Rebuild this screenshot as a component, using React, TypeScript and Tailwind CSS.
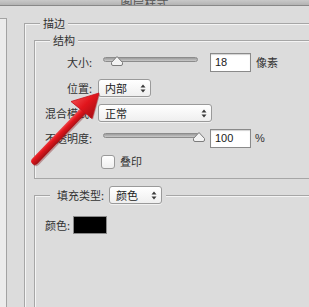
import type { ReactNode } from "react";

const LINE = "border-[#a6a6a6]";

function UpDown() {
  return (
    <svg width="6" height="9" viewBox="0 0 6 9" className="shrink-0">
      <path d="M3 0.5 L5.5 3.5 L0.5 3.5 Z" fill="#3a3a3a" />
      <path d="M3 8.5 L5.5 5.5 L0.5 5.5 Z" fill="#3a3a3a" />
    </svg>
  );
}

function Select({ value, width }: { value: string; width: string }) {
  return (
    <div
      className={`${width} flex h-[18px] shrink-0 items-center justify-between rounded-[3px] border border-[#9a9a9a] bg-linear-to-b from-white to-[#efefef] pl-[6px] pr-[4px] shadow-[0_1px_0_rgba(255,255,255,0.6)]`}
    >
      <span className="text-[11px] leading-none text-[#222]">{value}</span>
      <UpDown />
    </div>
  );
}

function Thumb({ left }: { left: string }) {
  return (
    <svg width="12" height="10" viewBox="0 0 12 10" className={`absolute top-[-2px] ${left}`}>
      <path
        d="M6 0.5 L11.5 6.5 L11.5 8 Q11.5 9.5 10 9.5 L2 9.5 Q0.5 9.5 0.5 8 L0.5 6.5 Z"
        fill="#f3f3f3"
        stroke="#7c7c7c"
      />
    </svg>
  );
}

function Slider({ width, thumb }: { width: string; thumb: string }) {
  return (
    <div className={`${width} h-[19px] shrink-0 self-start pt-[4px]`}>
      <div className="relative h-[5px] rounded-full border border-[#8c8c8c] bg-linear-to-b from-[#9c9c9c] to-[#c9c9c9]">
        <Thumb left={thumb} />
      </div>
    </div>
  );
}

function NumberBox({ value }: { value: string }) {
  return (
    <div className="flex h-[19px] w-[41px] shrink-0 items-center border border-[#8a8a8a] bg-white pl-[4px] font-['Liberation_Sans',sans-serif] text-[11px] text-[#1a1a1a] shadow-[inset_0_1px_1px_rgba(0,0,0,0.18)]">
      {value}
    </div>
  );
}

function Label({ children }: { children: ReactNode }) {
  return <div className="w-[57px] shrink-0 text-right text-[11px] leading-none text-[#333]">{children}</div>;
}

function Group({
  title,
  bodyClass,
  children,
}: {
  title: string;
  bodyClass: string;
  children: ReactNode;
}) {
  return (
    <div className="flex flex-col">
      <div className="flex h-[14px] items-center">
        <div className={`h-[7px] w-[16px] self-end border-l border-t ${LINE} shadow-[inset_1px_1px_0_#f4f4f4]`} />
        <span className="px-[3px] text-[11px] leading-none text-[#333]">{title}</span>
        <div className={`h-[7px] flex-1 self-end border-t ${LINE} shadow-[inset_0_1px_0_#f4f4f4]`} />
      </div>
      <div className={`border-l ${LINE} shadow-[inset_1px_0_0_#f4f4f4] ${bodyClass}`}>{children}</div>
    </div>
  );
}

function RedArrow() {
  return (
    <svg width="309" height="307" viewBox="0 0 309 307" className="pointer-events-none absolute left-0 top-0">
      <defs>
        <linearGradient id="shaft" gradientUnits="userSpaceOnUse" x1="57" y1="131" x2="63" y2="137">
          <stop offset="0" stopColor="#f25a5c" />
          <stop offset="0.45" stopColor="#e3161d" />
          <stop offset="1" stopColor="#a90f14" />
        </linearGradient>
        <linearGradient id="head" gradientUnits="userSpaceOnUse" x1="74" y1="98" x2="92" y2="116">
          <stop offset="0" stopColor="#f0484b" />
          <stop offset="0.5" stopColor="#e1151c" />
          <stop offset="1" stopColor="#ae1016" />
        </linearGradient>
      </defs>
      <line x1="35" y1="161" x2="84" y2="110" stroke="#7a0a0d" strokeOpacity="0.35" strokeWidth="8" strokeLinecap="round" transform="translate(1 1)" />
      <path d="M99 93 L71 101.5 L92 118.5 Z" fill="#7a0a0d" fillOpacity="0.35" transform="translate(1 1)" />
      <line x1="35" y1="161" x2="84" y2="110" stroke="url(#shaft)" strokeWidth="7.5" strokeLinecap="round" />
      <path d="M99 93 L71 101.5 L92 118.5 Z" fill="url(#head)" stroke="#c5121a" strokeWidth="0.8" strokeLinejoin="round" />
    </svg>
  );
}

export default function App() {
  return (
    <div className="relative h-[307px] w-[309px] overflow-hidden bg-[#dcdcdc] font-['Noto_Sans_CJK_SC','Noto_Sans',sans-serif]">
      <div className="flex h-[6px] items-end justify-center overflow-hidden border-b border-[#888] bg-linear-to-b from-[#c9c9c9] to-[#b3b3b3]">
        <span className="mb-[-5px] ml-[-20px] text-[12px] leading-[12px] text-[#555]">图层样式</span>
      </div>
      <div className="flex">
        <div className="mt-[12px] h-[300px] w-[7px] shrink-0 border-r border-t border-[#a3a3a3] bg-[#ececec]" />
        <div className="ml-[17px] mt-[10px] w-[330px] shrink-0">
          <Group title="描边" bodyClass="h-[300px] pl-[9px] pt-[3px]">
            <Group title="结构" bodyClass="border-b pb-[10px] pt-[6px]">
              <div className="flex h-[19px] items-center">
                <Label>大小:</Label>
                <div className="ml-[11px] flex items-center">
                  <Slider width="w-[95px]" thumb="left-[7px]" />
                  <div className="ml-[12px]">
                    <NumberBox value="18" />
                  </div>
                  <span className="ml-[5px] text-[11px] leading-none text-[#333]">像素</span>
                </div>
              </div>
              <div className="mt-[7px] flex h-[18px] items-center">
                <Label>位置:</Label>
                <div className="ml-[6px]">
                  <Select value="内部" width="w-[53px]" />
                </div>
              </div>
              <div className="mt-[7px] flex h-[18px] items-center">
                <Label>混合模式:</Label>
                <div className="ml-[6px]">
                  <Select value="正常" width="w-[114px]" />
                </div>
              </div>
              <div className="mt-[7px] flex h-[19px] items-center">
                <Label>不透明度:</Label>
                <div className="ml-[11px] flex items-center">
                  <Slider width="w-[97px]" thumb="left-[89px]" />
                  <div className="ml-[10px]">
                    <NumberBox value="100" />
                  </div>
                  <span className="ml-[4px] font-['Liberation_Sans',sans-serif] text-[11px] leading-none text-[#333]">%</span>
                </div>
              </div>
              <div className="mt-[7px] flex h-[13px] items-center pl-[66px]">
                <div className="h-[14px] w-[14px] rounded-[3px] border border-[#9a9a9a] bg-linear-to-b from-white to-[#efefef]" />
                <span className="ml-[5px] text-[11px] leading-none text-[#333]">叠印</span>
              </div>
            </Group>

            <div className="mt-[7px] flex flex-col">
              <div className="flex h-[18px] items-center">
                <div className={`h-[9px] w-[16px] self-end border-l border-t ${LINE} shadow-[inset_1px_1px_0_#f4f4f4]`} />
                <span className="ml-[7px] text-[11px] leading-none text-[#333]">填充类型:</span>
                <div className="ml-[5px]">
                  <Select value="颜色" width="w-[53px]" />
                </div>
                <div className={`ml-[4px] h-[9px] flex-1 self-end border-t ${LINE} shadow-[inset_0_1px_0_#f4f4f4]`} />
              </div>
              <div className={`h-[120px] border-l ${LINE} pl-[10px] pt-[12px] shadow-[inset_1px_0_0_#f4f4f4]`}>
                <div className="flex h-[18px] items-center">
                  <span className="text-[11px] leading-none text-[#333]">颜色:</span>
                  <div className="ml-[3px] h-[18px] w-[34px] border border-[#8a8a8a] bg-black" />
                </div>
              </div>
            </div>
          </Group>
        </div>
      </div>
      <RedArrow />
    </div>
  );
}
